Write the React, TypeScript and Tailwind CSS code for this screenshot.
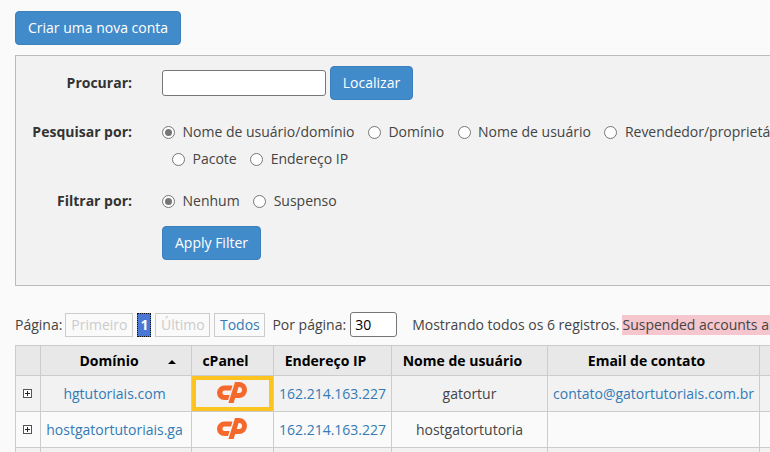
const font = { fontFamily: '"Open Sans", "Liberation Sans", sans-serif' };

function Radio({ label, checked = false }: { label: string; checked?: boolean }) {
  return (
    <span className="flex items-center whitespace-nowrap">
      <span className="flex h-[13px] w-[13px] shrink-0 items-center justify-center rounded-full border border-[#767676] bg-white">
        {checked && <span className="h-[7px] w-[7px] rounded-full bg-[#767676]" />}
      </span>
      <span className="ml-[7.5px]">{label}</span>
    </span>
  );
}

function Logo() {
  return (
    <div className="flex justify-center pb-[3px] pr-[2px]">
      <svg width="30" height="21" viewBox="0 0 30 21" className="block" fill="#f4692b">
        <path d="M7.2 3.6 H15.5 L14 8.6 H7.6 A2.2 2.2 0 0 0 7.6 13 H12.6 L11.1 18 H7.2 A7.2 7.2 0 0 1 7.2 3.6 Z" />
        <path d="M18 0 H22 A8 8 0 0 1 22 16 H18.2 L19.6 11 H22 A3 3 0 0 0 22 5 H21.6 L16.6 21 H11.4 Z" />
      </svg>
    </div>
  );
}

function Expand() {
  return (
    <div className="flex justify-center pr-[2px]">
      <span className="flex h-[9px] w-[9px] items-center justify-center border border-[#555] bg-white">
        <svg width="7" height="7" viewBox="0 0 7 7" className="block">
          <path d="M3.5 1 V6 M1 3.5 H6" stroke="#222" strokeWidth="1" />
        </svg>
      </span>
    </div>
  );
}

function PageBox({ children, className }: { children: React.ReactNode; className: string }) {
  return <span className={`flex h-[24px] items-center justify-center border border-[#ccc] ${className}`}>{children}</span>;
}

const btn = "rounded-[4px] border border-[#3a81bd] bg-[#428bca] text-white text-sm";
const th = "border border-[#ccc] bg-[#e8e8e8] font-bold text-black p-0 pr-[14px] text-center";
const td = "border border-[#ccc] p-0 text-center";
const link = "text-[#337ab7]";

export default function App() {
  return (
    <div style={font} className="relative h-[452px] w-[770px] overflow-hidden bg-[#fafafa] text-sm leading-[20px] text-[#444]">
      <div className="w-[1000px] pl-[15px] pt-[11px]">
        <button className={`${btn} h-[34px] w-[166px]`}>Criar uma nova conta</button>

        <div className="mt-[10px] h-[231px] w-[960px] border border-[#bbb] bg-[#f2f2f2] pt-[10px]">
          <div className="flex items-center">
            <div className="w-[116px] text-right font-bold text-[#333]">Procurar:</div>
            <div className="ml-[30px] flex items-center">
              <input className="h-[26px] w-[164px] rounded-[3px] border border-[#767676] bg-white" />
              <button className={`${btn} ml-[4px] h-[34px] w-[83px]`}>Localizar</button>
            </div>
          </div>

          <div className="mt-[22px] flex">
            <div className="w-[116px] text-right font-bold text-[#333]">Pesquisar por:</div>
            <div className="ml-[30px]">
              <div className="flex gap-[13.5px]">
                <Radio label="Nome de usuário/domínio" checked />
                <Radio label="Domínio" />
                <Radio label="Nome de usuário" />
                <Radio label="Revendedor/proprietário" />
              </div>
              <div className="ml-[10px] mt-[7px] flex gap-[13.5px]">
                <Radio label="Pacote" />
                <Radio label="Endereço IP" />
              </div>
            </div>
          </div>

          <div className="mt-[22px] flex">
            <div className="w-[116px] text-right font-bold text-[#333]">Filtrar por:</div>
            <div className="ml-[30px] flex gap-[13.5px]">
              <Radio label="Nenhum" checked />
              <Radio label="Suspenso" />
            </div>
          </div>

          <div className="ml-[146px] mt-[15px]">
            <button className={`${btn} h-[34px] w-[99px]`}>Apply Filter</button>
          </div>
        </div>

        <div className="mt-[26px] flex h-[25px] items-center whitespace-nowrap">
          <span>Página:</span>
          <PageBox className="ml-[3px] w-[68px] text-[#ccc]">Primeiro</PageBox>
          <span className="ml-[4px] flex h-[24px] w-[14px] items-center justify-center border border-dotted border-[#111] bg-[#4a76d4] font-bold text-white">1</span>
          <PageBox className="ml-[4px] w-[55px] text-[#ccc]">Último</PageBox>
          <PageBox className="ml-[4px] w-[51px] text-[#337ab7]">Todos</PageBox>
          <span className="ml-[7px]">Por página:</span>
          <span className="ml-[4px] flex h-[25px] w-[47px] items-center rounded-[3px] border border-[#767676] bg-white pl-[4px] text-black">30</span>
          <span className="ml-[15px]">Mostrando todos os 6 registros.</span>
          <span className="ml-[3px] bg-[#f5c6cd]">Suspended accounts are highlighted</span>
        </div>

        <table className="mt-[8px] table-fixed border-collapse">
          <colgroup>
            <col className="w-[25px]" />
            <col className="w-[151px]" />
            <col className="w-[82px]" />
            <col className="w-[118px]" />
            <col className="w-[156px]" />
            <col className="w-[212px]" />
            <col className="w-[100px]" />
          </colgroup>
          <thead>
            <tr className="h-[30px]">
              <th className={th}></th>
              <th className={`${th} relative`}>
                <span className="block">Domínio</span>
                <span className="absolute right-[15px] top-[14px] h-0 w-0 border-x-[4px] border-b-[4px] border-x-transparent border-b-black" />
              </th>
              <th className={th}>cPanel</th>
              <th className={th}>Endereço IP</th>
              <th className={th}>Nome de usuário</th>
              <th className={th}>Email de contato</th>
              <th className={th}></th>
            </tr>
          </thead>
          <tbody>
            <tr className="h-[36px] bg-[#f2f2f2]">
              <td className={td}><Expand /></td>
              <td className={`${td} ${link} pr-[3px]`}>hgtutoriais.com</td>
              <td className={td}>
                <div className="flex h-[35px] items-center justify-center border-[4px] border-[#fdc321]"><Logo /></div>
              </td>
              <td className={`${td} ${link}`}>162.214.163.227</td>
              <td className={td}>gatortur</td>
              <td className={`${td} ${link}`}>contato@gatortutoriais.com.br</td>
              <td className={td}></td>
            </tr>
            <tr className="h-[36px] bg-[#fafafa]">
              <td className={td}><Expand /></td>
              <td className={`${td} ${link} pr-[3px]`}>hostgatortutoriais.ga</td>
              <td className={td}><Logo /></td>
              <td className={`${td} ${link}`}>162.214.163.227</td>
              <td className={td}>hostgatortutoria</td>
              <td className={td}></td>
              <td className={td}></td>
            </tr>
            <tr className="h-[36px] bg-[#f2f2f2]">
              <td className={td}></td><td className={td}></td><td className={td}></td><td className={td}></td><td className={td}></td><td className={td}></td><td className={td}></td>
            </tr>
          </tbody>
        </table>
      </div>
    </div>
  );
}
